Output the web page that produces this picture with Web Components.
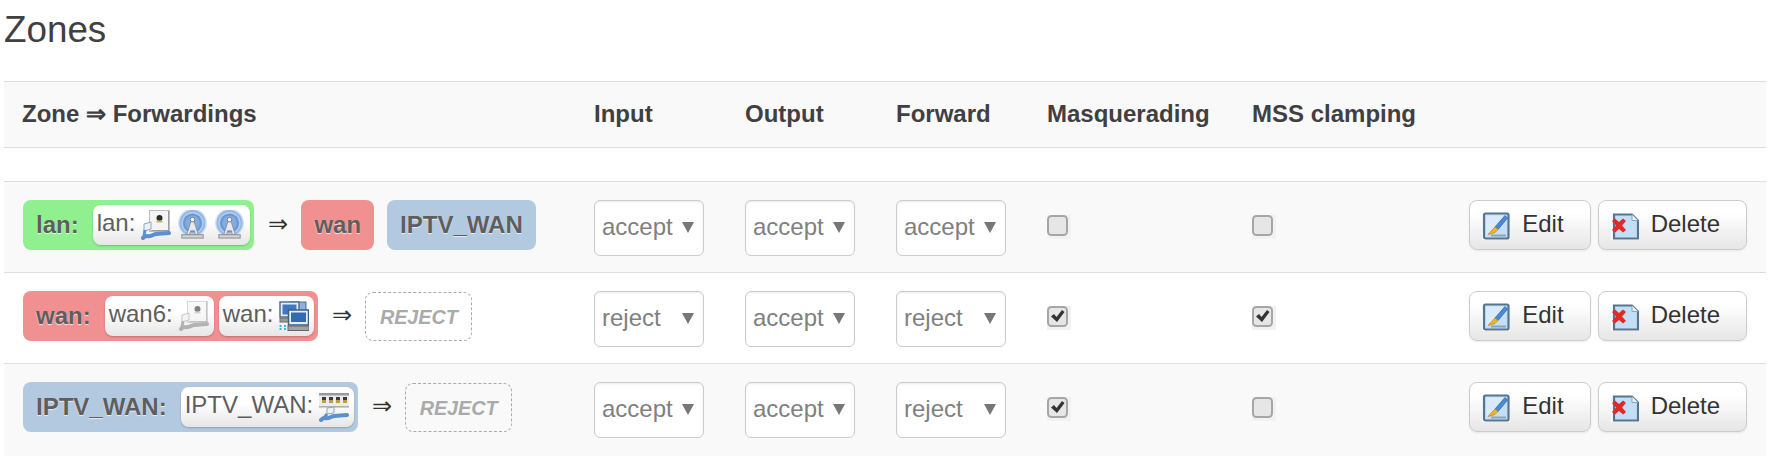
<!DOCTYPE html>
<html>
<head>
<meta charset="utf-8">
<title>Zones</title>
<style>
    body{
        margin: 0;
        background: white;
        color: #404040;
        font: 24px/30px "Liberation Sans", Arial, sans-serif;
    }
</style>
</head>
<body>
<zone-section title="Zones">
    <zone-row head>
        <span>Zone ⇒ Forwardings</span>
        <span>Input</span>
        <span>Output</span>
        <span>Forward</span>
        <span>Masquerading</span>
        <span>MSS clamping</span>
        <span></span>
    </zone-row>
    <zone-spacer></zone-spacer>

    <zone-row striped>
        <zone-flow>
            <zone-badge color="#90f090" label="lan:">
                <iface-badge label="lan:"><net-icon type="ethernet"></net-icon><net-icon type="wifi"></net-icon><net-icon type="wifi"></net-icon></iface-badge>
            </zone-badge>
            <zone-badge color="#f09090" label="wan"></zone-badge>
            <zone-badge color="#b3c9e0" label="IPTV_WAN"></zone-badge>
        </zone-flow>
        <policy-select value="accept"></policy-select>
        <policy-select value="accept"></policy-select>
        <policy-select value="accept"></policy-select>
        <zone-check></zone-check>
        <zone-check></zone-check>
        <row-actions></row-actions>
    </zone-row>

    <zone-row>
        <zone-flow>
            <zone-badge color="#f09090" label="wan:">
                <iface-badge label="wan6:"><net-icon type="ethernet" off></net-icon></iface-badge>
                <iface-badge label="wan:"><net-icon type="bridge"></net-icon></iface-badge>
            </zone-badge>
            <reject-badge></reject-badge>
        </zone-flow>
        <policy-select value="reject"></policy-select>
        <policy-select value="accept"></policy-select>
        <policy-select value="reject"></policy-select>
        <zone-check checked></zone-check>
        <zone-check checked></zone-check>
        <row-actions></row-actions>
    </zone-row>

    <zone-row striped>
        <zone-flow>
            <zone-badge color="#b3c9e0" label="IPTV_WAN:">
                <iface-badge label="IPTV_WAN:"><net-icon type="vlan"></net-icon></iface-badge>
            </zone-badge>
            <reject-badge></reject-badge>
        </zone-flow>
        <policy-select value="accept"></policy-select>
        <policy-select value="accept"></policy-select>
        <policy-select value="reject"></policy-select>
        <zone-check checked></zone-check>
        <zone-check></zone-check>
        <row-actions></row-actions>
    </zone-row>
</zone-section>

<script>
// icon drawings, used by net-icon and action-button
var icons = {
    ethernet: `<svg viewBox="0 0 30 30" width="30" height="30">
        <rect x="8.5" y="0.5" width="20" height="21" fill="#f4f4f4" stroke="#bdbdbd"/>
        <path d="M28 1v20H10v-1h17V1z" fill="#9c9c9c"/>
        <circle cx="18.500" cy="8" r="3" fill="#2b2b2b"/>
        <path d="M15.500 10.500h6v2h-6z" fill="#c9b866"/>
        <path d="M3 14l7-2v7l-7 2z" fill="#eef2f6" stroke="#8ba6c8"/>
        <path d="M2 28c4-4 5 0 10-3 4-2 10-1 16-2" fill="none" stroke="#5b8fd0" stroke-width="4" stroke-linecap="round"/>
        <path d="M4 20l-1 6" stroke="#5b8fd0" stroke-width="3"/>
    </svg>`,
    wifi: `<svg viewBox="0 0 32 30" width="31" height="30">
        <circle cx="16" cy="13" r="15" fill="#d5e3f5"/>
        <circle cx="16" cy="13" r="13.500" fill="#94b8e4"/>
        <circle cx="16" cy="13" r="11.500" fill="#b4cdec"/>
        <circle cx="16" cy="13" r="10" fill="#6b9ada"/>
        <circle cx="16" cy="13" r="7.500" fill="#85acdf"/>
        <path d="M14.500 11h3l4.500 14h-3l-1-4h-4l-1 4h-3z" fill="#e9e9e9" stroke="#7d8792" stroke-width=".8"/>
        <circle cx="16" cy="9.500" r="2.400" fill="#f5f5f5" stroke="#6b7b8c"/>
        <rect x="5" y="25" width="22" height="3.500" fill="#d2d2d2" stroke="#8c8c8c"/>
    </svg>`,
    bridge: `<svg viewBox="0 0 30 30" width="30" height="30">
        <rect x="11" y="1" width="16" height="13" fill="#8fb0d8" stroke="#4f6f98"/>
        <rect x="1" y="1" width="19" height="15" fill="#e8eef6" stroke="#51708f" stroke-width="1.500"/>
        <rect x="3.500" y="3.500" width="14" height="10" fill="#3f78c0"/>
        <rect x="1" y="17" width="12" height="4" fill="#9a9a9a" stroke="#6a6a6a"/>
        <rect x="9.500" y="9" width="20" height="15" fill="#e8eef6" stroke="#3d5f85" stroke-width="1.500"/>
        <rect x="12" y="11.500" width="15" height="9.500" fill="#2f6cb5"/>
        <rect x="9" y="25" width="21" height="4.500" fill="#a3a3a3" stroke="#666"/>
        <path d="M1.500 24v5M6 24v5" stroke="#41a4d8" stroke-width="1.800" stroke-dasharray="2 1"/>
    </svg>`,
    vlan: `<svg viewBox="0 0 30 30" width="30" height="30">
        <rect x="0" y="1" width="30" height="15" fill="#ececec"/>
        <rect x="0" y="1" width="30" height="2.500" fill="#9a9a9a"/>
        <path d="M3 5h4v3H3zM10 5h4v3h-4zM17 5h4v3h-4zM24 5h4v3h-4z" fill="#3a3a3a"/>
        <path d="M3 8h4v3H3zM10 8h4v3h-4zM17 8h4v3h-4zM24 8h4v3h-4z" fill="#b9a23c"/>
        <rect x="0" y="14" width="30" height="1.500" fill="#b0b0b0"/>
        <path d="M8 16l7-1v6l-7 1z" fill="#eef2f6" stroke="#8ba6c8"/>
        <path d="M2 28c4-4 5 0 10-3 4-2 10-1 16-2" fill="none" stroke="#5b8fd0" stroke-width="4" stroke-linecap="round"/>
        <path d="M8 22l-3 4" stroke="#5b8fd0" stroke-width="3"/>
    </svg>`,
    edit: `<svg viewBox="0 0 28 28" width="28" height="28">
        <rect width="28" height="28" fill="#fff"/>
        <rect x="2" y="1.500" width="24.500" height="25" rx="1.500" fill="#c4def6" stroke="#58758f" stroke-width="2.200"/>
        <path d="M4 24V3.500h20z" fill="#dbeafa"/>
        <path d="M9 23.500h15" stroke="#8ba4bd" stroke-width="2"/>
        <path d="M13 15L23 3.500l2.500 2.500L16 17.500z" fill="#4a8ad4" stroke="#2f6aa8" stroke-width=".8"/>
        <path d="M13 15l3 2.500-3 3-7 2z" fill="#f0b52e" stroke="#c98a10" stroke-width=".8"/>
    </svg>`,
    remove: `<svg viewBox="0 0 28 28" width="28" height="28">
        <rect width="28" height="28" fill="#fff"/>
        <path d="M3 2.500h18l6 6v18H3z" fill="#c4def6" stroke="#58758f" stroke-width="2.200"/>
        <path d="M21 2.500v6h6" fill="#e8f3fc" stroke="#8ba4bd"/>
        <path d="M1 9l3-2.500 4 3.500 4-3.500 3 2.500-4 4.500 4 4.500-3 2.500-4-3.500-4 3.500-3-2.500 4-4.500z" fill="#e02a26"/>
    </svg>`
};

var template_section = document.createElement("template");
template_section.innerHTML = `
<style>
    :host{ display: block; padding-left: 4px; width: 1762px; }
    h3{
        margin: 0;
        padding: 9px 0 0 0;
        height: 81px;
        box-sizing: border-box;
        font-size: 36.8px;
        line-height: 42px;
        font-weight: normal;
        color: #404040;
    }
</style>
<h3></h3>
<slot></slot>
`;
class ZoneSection extends HTMLElement {
    constructor(){
        super();
        this.attachShadow({mode:"open"});
    }
    connectedCallback(){
        this.shadowRoot.appendChild(template_section.content.cloneNode(true));
        this.shadowRoot.querySelector("h3").textContent = this.getAttribute("title");
        this.removeAttribute("title");
    }
}
customElements.define("zone-section", ZoneSection);

var template_row = document.createElement("template");
template_row.innerHTML = `
<style>
    :host{
        display: grid;
        grid-template-columns: 572px 151px 151px 151px 205px 205px 1fr;
        box-sizing: border-box;
        height: 91px;
        padding: 18px 19px 0 18px;
        border-top: 1px solid #ddd;
        align-items: start;
        background: white;
    }
    :host([striped]){ background: #f9f9f9; }
    :host([head]){
        height: 67px;
        padding-top: 0;
        padding-bottom: 2px;
        align-items: center;
        font-weight: bold;
        background: #f9f9f9;
        border-bottom: 1px solid #ddd;
    }
    :host(:last-child){ height: 93px; }
</style>
<slot></slot>
`;
class ZoneRow extends HTMLElement {
    constructor(){
        super();
        this.attachShadow({mode:"open"}).appendChild(template_row.content.cloneNode(true));
    }
}
customElements.define("zone-row", ZoneRow);

class ZoneSpacer extends HTMLElement {
    constructor(){
        super();
        this.attachShadow({mode:"open"}).innerHTML = `<style>:host{ display: block; height: 33px; }</style>`;
    }
}
customElements.define("zone-spacer", ZoneSpacer);

var template_flow = document.createElement("template");
template_flow.innerHTML = `
<style>
    :host{ display: flex; align-items: flex-start; margin-left: 1px; }
    .arrow{
        width: 19px;
        margin: 0 14px;
        height: 50px;
        line-height: 48px;
        text-align: center;
        color: #333;
    }
    .rest{ display: flex; align-items: flex-start; gap: 13px; }
</style>
<slot name="first"></slot>
<div class="arrow">⇒</div>
<div class="rest"><slot></slot></div>
`;
class ZoneFlow extends HTMLElement {
    constructor(){
        super();
        this.attachShadow({mode:"open"}).appendChild(template_flow.content.cloneNode(true));
    }
    connectedCallback(){
        this.firstElementChild.setAttribute("slot", "first");
    }
}
customElements.define("zone-flow", ZoneFlow);

var template_zone = document.createElement("template");
template_zone.innerHTML = `
<style>
    :host{
        display: inline-flex;
        align-items: center;
        box-sizing: border-box;
        height: 50px;
        padding: 0 13px;
        border-radius: 8px;
        white-space: nowrap;
    }
    :host([nested]){ padding-right: 4px; }
    b{
        color: #5e5e5e;
        text-shadow: 0 1px 1px rgba(255,255,255,.75);
    }
    :host([nested]) b{ margin-right: 14px; }
    .ifaces{ display: flex; gap: 5px; }
</style>
<b></b>
<div class="ifaces"><slot></slot></div>
`;
class ZoneBadge extends HTMLElement {
    constructor(){
        super();
        this.attachShadow({mode:"open"}).appendChild(template_zone.content.cloneNode(true));
    }
    connectedCallback(){
        this.shadowRoot.querySelector("b").textContent = this.getAttribute("label");
        this.style.background = this.getAttribute("color");
        if(this.children.length) this.setAttribute("nested", "");
    }
}
customElements.define("zone-badge", ZoneBadge);

var template_iface = document.createElement("template");
template_iface.innerHTML = `
<style>
    :host{
        display: inline-flex;
        align-items: center;
        box-sizing: border-box;
        height: 40px;
        padding: 0 5px 0 4px;
        border-radius: 8px;
        background: linear-gradient(#fff 40%, #e6e6e6);
        box-shadow: 0 1px 2px rgba(0,0,0,.22);
        color: #5e5e5e;
    }
    span{ margin: -4px 6px 0 0; }
    .icons{ display: flex; gap: 6px; }
</style>
<span></span>
<div class="icons"><slot></slot></div>
`;
class IfaceBadge extends HTMLElement {
    constructor(){
        super();
        this.attachShadow({mode:"open"}).appendChild(template_iface.content.cloneNode(true));
    }
    connectedCallback(){
        this.shadowRoot.querySelector("span").textContent = this.getAttribute("label");
    }
}
customElements.define("iface-badge", IfaceBadge);

class NetIcon extends HTMLElement {
    constructor(){
        super();
        this.attachShadow({mode:"open"});
    }
    connectedCallback(){
        this.shadowRoot.innerHTML = `
        <style>
            :host{ display: block; width: 30px; height: 30px; }
            :host([type="wifi"]){ width: 31px; }
            :host([off]){ filter: grayscale(1) opacity(.6); }
            svg{ display: block; }
        </style>` + icons[this.getAttribute("type")];
    }
}
customElements.define("net-icon", NetIcon);

var template_reject = document.createElement("template");
template_reject.innerHTML = `
<style>
    :host{
        display: flex;
        align-items: center;
        box-sizing: border-box;
        width: 107px;
        height: 49px;
        margin-top: 1px;
        justify-content: center;
        border: 1px dashed #aaa;
        border-radius: 8px;
        color: #aaa;
        font-size: 19.8px;
        font-weight: bold;
        font-style: italic;
    }
</style>
REJECT
`;
class RejectBadge extends HTMLElement {
    constructor(){
        super();
        this.attachShadow({mode:"open"}).appendChild(template_reject.content.cloneNode(true));
    }
}
customElements.define("reject-badge", RejectBadge);

var template_select = document.createElement("template");
template_select.innerHTML = `
<style>
    :host{
        display: flex;
        align-items: center;
        justify-content: space-between;
        box-sizing: border-box;
        width: 110px;
        height: 56px;
        padding: 0 9px 0 7px;
        border: 1px solid #ccc;
        border-radius: 6px;
        background: white;
        box-shadow: inset 0 1px 2px rgba(0,0,0,.08);
        color: #808080;
    }
    span{ margin-top: -2px; }
    svg{ display: block; margin-top: -2px; }
</style>
<span></span>
<svg width="12" height="11" viewBox="0 0 12 11"><path d="M0 0h12L6 11z" fill="#777"/></svg>
`;
class PolicySelect extends HTMLElement {
    constructor(){
        super();
        this.attachShadow({mode:"open"}).appendChild(template_select.content.cloneNode(true));
    }
    connectedCallback(){
        this.shadowRoot.querySelector("span").textContent = this.getAttribute("value");
    }
}
customElements.define("policy-select", PolicySelect);

var template_check = document.createElement("template");
template_check.innerHTML = `
<style>
    :host{ display: block; width: 24px; height: 24px; margin-top: 15px; }
    svg{ display: block; }
</style>
<svg width="24" height="24" viewBox="0 0 24 24">
    <rect width="24" height="24" fill="#f2f2f2"/>
    <rect x="1" y="1" width="19" height="19" rx="3.500" fill="#e6e6e6" stroke="#a6a6a6" stroke-width="2"/>
    <path class="tick" d="M4 10.500l3-2.500 2.500 3L15 4l2.500 2-7.500 10z" fill="#333"/>
</svg>
`;
class ZoneCheck extends HTMLElement {
    constructor(){
        super();
        this.attachShadow({mode:"open"}).appendChild(template_check.content.cloneNode(true));
    }
    connectedCallback(){
        if(!this.hasAttribute("checked")) this.shadowRoot.querySelector(".tick").remove();
    }
}
customElements.define("zone-check", ZoneCheck);

var template_button = document.createElement("template");
template_button.innerHTML = `
<style>
    :host{
        display: inline-flex;
        align-items: center;
        gap: 12px;
        box-sizing: border-box;
        height: 50px;
        padding: 0 26px 0 12px;
        border: 1px solid #ccc;
        border-radius: 8px;
        background: linear-gradient(#fff 25%, #e6e6e6);
        box-shadow: 0 1px 2px rgba(0,0,0,.08);
        color: #333;
    }
    svg{ display: block; margin-top: 1px; }
    span{ margin-top: -3px; }
</style>
`;
class ActionButton extends HTMLElement {
    constructor(){
        super();
        this.attachShadow({mode:"open"}).appendChild(template_button.content.cloneNode(true));
    }
    connectedCallback(){
        this.shadowRoot.innerHTML += icons[this.getAttribute("icon")] + `<span>${this.getAttribute("label")}</span>`;
    }
}
customElements.define("action-button", ActionButton);

class RowActions extends HTMLElement {
    constructor(){
        super();
        this.attachShadow({mode:"open"}).innerHTML = `
        <style>:host{ display: flex; justify-content: flex-end; gap: 7px; }</style>
        <action-button icon="edit" label="Edit"></action-button>
        <action-button icon="remove" label="Delete"></action-button>`;
    }
}
customElements.define("row-actions", RowActions);
</script>
</body>
</html>
